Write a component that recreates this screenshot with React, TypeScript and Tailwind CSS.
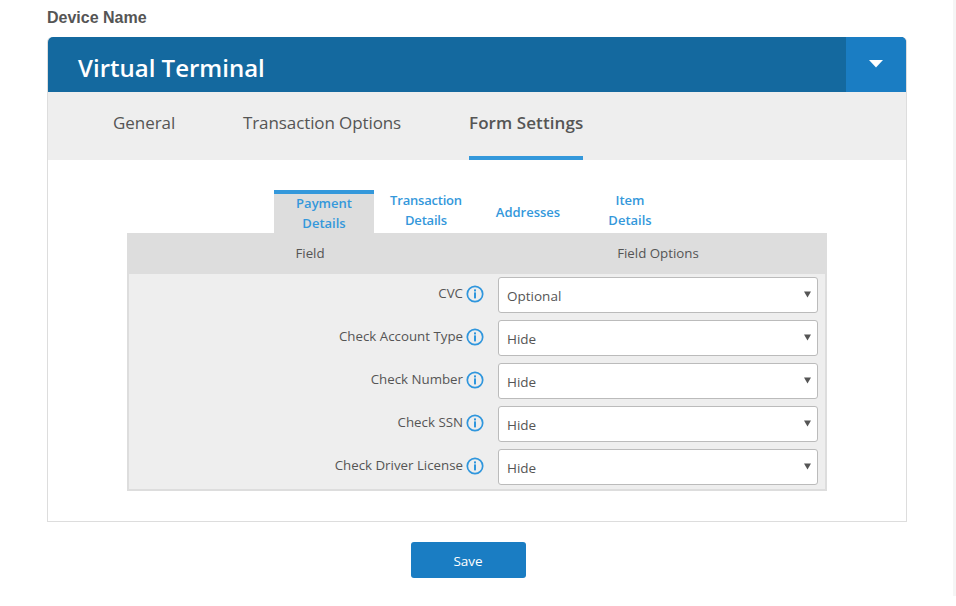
import React from "react";

function Info() {
  return (
    <svg width="18" height="18" viewBox="0 0 18 18" className="shrink-0 text-[#2f96dd]" fill="none">
      <circle cx="9" cy="9" r="7.7" stroke="currentColor" strokeWidth="1.7" />
      <rect x="8" y="7.4" width="2" height="6" fill="currentColor" />
      <rect x="8" y="4.4" width="2" height="2" fill="currentColor" />
    </svg>
  );
}

const rows = [
  ["CVC", "Optional"],
  ["Check Account Type", "Hide"],
  ["Check Number", "Hide"],
  ["Check SSN", "Hide"],
  ["Check Driver License", "Hide"],
];

function Row({ label, value }: { label: string; value: string }) {
  return (
    <div className="flex h-[43px] items-start">
      <div className="flex h-9 w-[355px] items-center justify-end gap-[3px] pb-[3px]">
        <span className="text-[13.3px] leading-none text-[#555]">{label}</span>
        <Info />
      </div>
      <div className="ml-[14px] flex h-9 w-[320px] items-center justify-between rounded-[3px] border border-[#bbb] bg-white pl-2 pr-[6px]">
        <span className="pt-[2px] text-[13.5px] text-[#555]">{value}</span>
        <svg width="7" height="7" viewBox="0 0 7 7" className="mb-[1px]"><path d="M0 0.5H7L3.5 6.5Z" fill="#555" /></svg>
      </div>
    </div>
  );
}

export default function App() {
  return (
    <div className="relative h-[606px] w-[956px] overflow-hidden bg-white font-['Open_Sans',sans-serif]">
      <div className="absolute right-0 top-0 h-[596px] w-[3px] bg-[#f5f5f5]" />
      <div className="px-[47px] pt-[9px]">
        <div className="h-[28px] font-['Liberation_Sans',sans-serif] text-base leading-[18px] font-bold text-[#555]">Device Name</div>
        <div className="h-[485px] w-[860px] rounded-t-[5px] border-x border-b border-[#ddd]">
          <div className="flex h-[55px] overflow-hidden rounded-t-[5px] bg-[#14699f]">
            <div className="flex-1 pl-[30px] pt-[13px] text-2xl leading-[36px] font-semibold text-white">Virtual Terminal</div>
            <div className="flex w-[60px] items-center justify-center bg-[#1a7dc3] pb-[1px]">
              <svg width="14" height="8" viewBox="0 0 14 8"><path d="M0 0H14L7 7.5Z" fill="#fff" /></svg>
            </div>
          </div>
          <div className="flex h-[68px] bg-[#eee] pl-[65px]">
            <div className="w-[130px] pt-[19px] text-[17px] leading-6 tracking-[-0.05px] text-[#555]">General</div>
            <div className="w-[226px] pt-[19px] text-[17px] leading-6 tracking-[-0.1px] text-[#555]">Transaction Options</div>
            <div className="h-[68px] border-b-4 border-[#3498db] pt-[19px] text-[17px] leading-6 tracking-[0.08px] font-semibold text-[#555]">Form Settings</div>
          </div>
          <div className="ml-[79px] w-[700px] pt-[30px]">
            <div className="ml-[147px] flex h-[43px] text-[13px] leading-5 font-semibold text-[#3498db]">
              <div className="w-[100px] border-t-4 border-[#3498db] bg-[#ddd] text-center"><div className="-mt-px">Payment<br />Details</div></div>
              <div className="w-[104px] text-center tracking-[-0.2px]">Transaction<br />Details</div>
              <div className="flex w-[100px] items-center justify-center">Addresses</div>
              <div className="w-[104px] text-center">Item<br />Details</div>
            </div>
            <div className="flex h-[41px] items-center bg-[#ddd] text-[13.3px] text-[#555]">
              <div className="w-[366px] text-center">Field</div>
              <div className="ml-[5px] w-[320px] text-center">Field Options</div>
            </div>
            <div className="h-[217px] border-x-2 border-b-2 border-[#ddd] bg-[#eee] pt-[3px]">
              {rows.map(([l, v]) => (
                <Row key={l} label={l} value={v} />
              ))}
            </div>
          </div>
        </div>
        <div className="mt-5 flex justify-center pr-[20px]">
          <button className="h-9 w-[115px] rounded-[3px] bg-[#1a7dc3] pt-[2px] text-[13.5px] text-white">Save</button>
        </div>
      </div>
    </div>
  );
}
